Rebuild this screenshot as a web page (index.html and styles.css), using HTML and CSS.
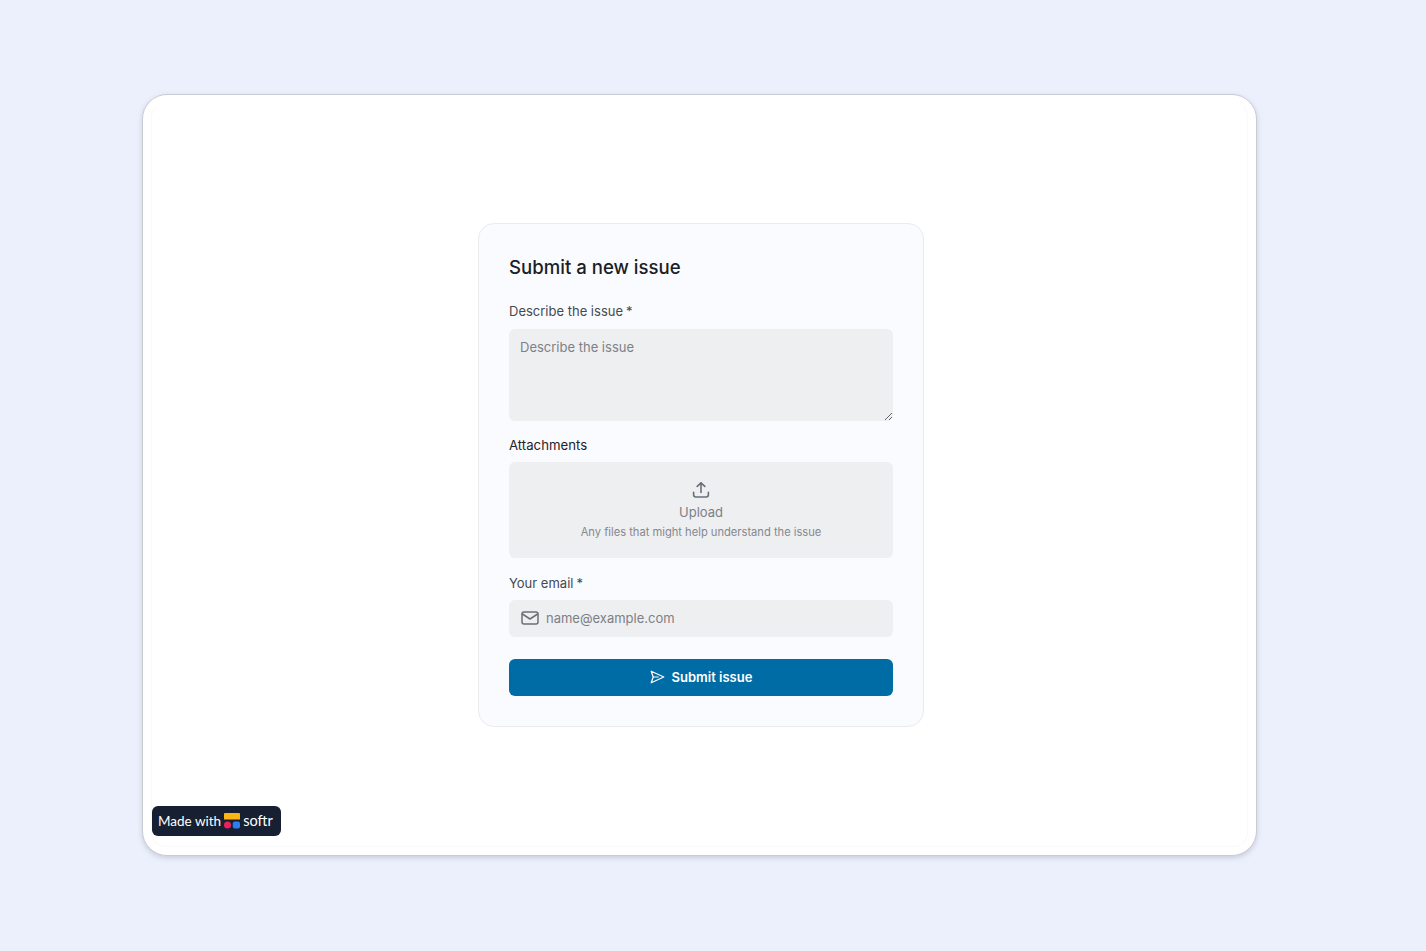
FILE: index.html
```html
<!DOCTYPE html>
<html lang="en">
<head>
  <meta charset="UTF-8">
  <title>Submit a new issue</title>
  <link rel="stylesheet" href="styles.css">
</head>
<body>
  <div class="frame">
    <div class="frame-inner">
      <form class="issue-card">
        <h1 class="issue-title">Submit a new issue</h1>

        <div class="field field-describe">
          <label class="field-label field-label-first" for="issue">Describe the issue<span class="req">*</span></label>
          <textarea class="field-area" id="issue" placeholder="Describe the issue"></textarea>
        </div>

        <div class="field field-attach">
          <span class="field-label field-label-dark">Attachments</span>
          <div class="upload-box">
            <svg class="upload-icon" width="20" height="20" viewBox="0 0 20 20" fill="none" stroke="#6b6f76" stroke-width="1.6" stroke-linecap="round" stroke-linejoin="round">
              <path d="M10 12.5V3"/>
              <path d="M6.2 6.4 10 2.8l3.8 3.6"/>
              <path d="M2.6 12.2v2.6c0 1.3 1 2.2 2.2 2.2h10.4c1.2 0 2.2-.9 2.2-2.2v-2.6"/>
            </svg>
            <span class="upload-title">Upload</span>
            <span class="upload-hint">Any files that might help understand the issue</span>
          </div>
        </div>

        <div class="field field-email">
          <label class="field-label" for="email">Your email<span class="req">*</span></label>
          <div class="email-box">
            <svg width="18" height="14" viewBox="0 0 18 14" fill="none" stroke="#6b6f76" stroke-width="1.5" stroke-linecap="round" stroke-linejoin="round">
              <rect x="1" y="1" width="16" height="12" rx="2"/>
              <path d="M1.4 3 9 8l7.6-5"/>
            </svg>
            <input class="email-input" id="email" type="text" placeholder="name@example.com">
          </div>
        </div>

        <button class="submit-btn" type="button">
          <svg width="15" height="14" viewBox="0 0 15 14" fill="none" stroke="#fff" stroke-width="1.2" stroke-linejoin="round" stroke-linecap="round">
            <path d="M1.2 1.2 13.8 7 1.2 12.8 3.2 7Z"/>
            <path d="M3.2 7h5"/>
          </svg>
          Submit issue
        </button>
      </form>
    </div>

    <div class="made-with">
      <span>Made with</span>
      <svg width="16" height="16" viewBox="0 0 16 16">
        <path fill="#fdb515" d="M1 0h14a1 1 0 0 1 1 1v5.500H0V1a1 1 0 0 1 1-1z"/>
        <circle fill="#ee1f5f" cx="3.500" cy="12" r="3.500"/>
        <rect fill="#2c7df0" x="8.800" y="8.500" width="7.200" height="7" rx="2"/>
      </svg>
      <span class="softr">softr</span>
    </div>
  </div>
</body>
</html>
```

FILE: styles.css
```css
* {
  box-sizing: border-box;
}

body {
  margin: 0;
  height: 951px;
  padding: 94px 169px 0 142px;
  background: #ecf0fc;
  font-family: 'Inter', 'Liberation Sans', sans-serif;
  overflow: hidden;
}

.frame {
  position: relative;
  width: 1115px;
  height: 762px;
  padding: 8px;
  background: #fff;
  border: 1px solid #c9ccd3;
  border-radius: 25px;
  box-shadow: 0 2px 5px rgba(90, 100, 130, 0.25);
}

.frame-inner {
  height: 100%;
  display: flex;
  justify-content: center;
  align-items: center;
  padding-left: 3px;
  border-radius: 14px;
  border: 1px solid #f9f9fa;
  border-top-color: transparent;
}

.issue-card {
  width: 446px;
  height: 504px;
  padding: 30px;
  background: #fafbfe;
  border: 1px solid #e9ebef;
  border-radius: 16px;
}

.issue-title {
  margin: 0 0 22px;
  font-size: 18.600px;
  line-height: 26px;
  font-weight: 500;
  color: #1b1e24;
}

.field-label {
  display: block;
  font-size: 13px;
  line-height: 18px;
  color: #46494f;
  margin-bottom: 8px;
}

.field-label-first {
  margin-bottom: 9px;
}

.field-label-dark {
  color: #1f2228;
  font-size: 13.200px;
}

.req {
  margin-left: 3px;
}

.field-area {
  display: block;
  width: 100%;
  height: 92px;
  padding: 10px 11px;
  background: #eeeff1;
  border: 0;
  border-radius: 6px;
  font: 13px/17px 'Inter', sans-serif;
  outline: 0;
}

.field-area::placeholder,
.email-input::placeholder {
  color: #7d8087;
  opacity: 1;
}

.field-attach {
  margin-top: 15px;
}

.upload-box {
  height: 96px;
  padding-top: 18px;
  display: flex;
  flex-direction: column;
  align-items: center;
  background: #eeeff1;
  border-radius: 6px;
}

.upload-title {
  margin-top: 2px;
  font-size: 13px;
  line-height: 20px;
  color: #7d8087;
}

.upload-hint {
  margin-top: 1px;
  font-size: 11.150px;
  line-height: 18px;
  color: #85888e;
}

.field-email {
  margin-top: 16px;
}

.email-box {
  height: 37px;
  padding: 0 11px 1px 12px;
  display: flex;
  align-items: center;
  gap: 7px;
  background: #eeeff1;
  border-radius: 6px;
}

.email-input {
  flex: 1;
  min-width: 0;
  padding: 0;
  background: none;
  border: 0;
  font: 13px 'Inter', sans-serif;
  outline: 0;
}

.submit-btn {
  width: 100%;
  height: 37px;
  margin-top: 22px;
  padding: 0 0 1px;
  display: flex;
  justify-content: center;
  align-items: center;
  gap: 7px;
  background: #006ca5;
  border: 0;
  border-radius: 6px;
  color: #fff;
  font: 600 13px 'Inter', sans-serif;
}

.made-with {
  position: absolute;
  left: 9px;
  bottom: 19px;
  width: 129px;
  height: 30px;
  padding-left: 6px;
  display: flex;
  align-items: center;
  gap: 3px;
  background: #172033;
  border-radius: 6px;
  color: #fff;
  font-family: 'Lato', 'Inter', sans-serif;
  font-size: 13.500px;
}

.softr {
  font-size: 14.500px;
  margin-top: -2px;
}
```
